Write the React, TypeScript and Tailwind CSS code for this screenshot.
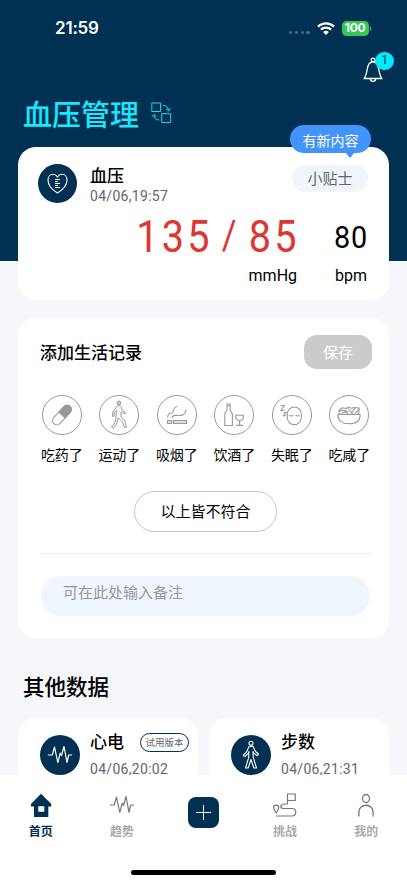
import type { ReactNode } from 'react';

// ---------- Icons ----------

function WifiIcon() {
  return (
    <svg width="18" height="13" viewBox="0 0 18 13" fill="none" stroke="#fff" strokeWidth="2.3">
      <path d="M1 4.6a11.6 11.6 0 0 1 16 0"/>
      <path d="M3.9 7.6a7.4 7.4 0 0 1 10.2 0"/>
      <path d="M9 13 6.1 10.1a4.2 4.2 0 0 1 5.8 0z" fill="#fff" stroke="none"/>
    </svg>
  );
}

function BellIcon() {
  return (
    <svg width="20" height="26" viewBox="0 0 20 26" fill="none" stroke="#fff" strokeWidth="1.3">
      <circle cx="10" cy="3" r="1.800"/>
      <path d="M1.300 21.500c1.600-3 2.500-5.500 2.900-9C4.800 7.800 6.500 4.900 10 4.900s5.200 2.900 5.800 7.600c.4 3.500 1.300 6 2.900 9z"/>
      <path d="M7.300 21.700c.2 3.600 5.200 3.600 5.400 0"/>
    </svg>
  );
}

function SwitchIcon() {
  return (
    <svg width="21" height="22" viewBox="0 0 21 22" fill="none" stroke="#12dff2" strokeWidth="1">
      <path d="M.8 1h8.800v8.500H.8zM10.700 11.700h9v8.800h-9z"/>
      <path d="M11.700 3.300c3.300 0 5.300 1.600 5.800 5M15 6.700l2.600 2.300 2-2.700"/>
      <path d="M8.300 18c-3.300 0-5-1.600-5.300-5M.800 15l2.100-2.500 2.700 2.300"/>
    </svg>
  );
}

function HeartIcon() {
  return (
    <svg width="21" height="21" viewBox="0 0 21 21" fill="none" stroke="#fff" strokeWidth="1.100">
      <path d="M10.500 20C5 16.600 1 12 1 7.300c0-3.500 2-6 5-6 2 0 3.500 1 4.500 2.700 1-1.700 2.500-2.700 4.500-2.700 3 0 5 2.500 5 6 0 4.700-4 9.300-9.500 12.700z"/>
      <path d="M8 6.500h5M8 8.500h3M8 10.500h5M8 12.500h3M8 14.500h5" strokeWidth="1"/>
    </svg>
  );
}

function PulseIcon({ className }: { className?: string }) {
  return (
    <svg className={className} width="26" height="20" viewBox="0 0 26 20" fill="none" stroke="currentColor" strokeWidth="1.200" strokeLinejoin="round">
      <path d="M.8 10h4.500L7.500 2l3.300 15.500 2.400-9.300 1.300 2.300L17 1.500l3 15.800 1.700-7.300h3.500"/>
    </svg>
  );
}

function StepsIcon() {
  return (
    <svg width="18" height="30" viewBox="0 0 18 30" fill="none" stroke="#fff" strokeWidth="1.100" strokeLinejoin="round">
      <circle cx="9" cy="3.200" r="2"/>
      <path d="M7 6.500h4l2.500 5 3 2.500-1.300 1.700-3.500-2.600-.7-1.600.2 5.700L14.500 28h-2.700L9 19.500 6.200 28H3.500l3.200-10.500.2-6-.9 2.400-3.500 2.800L1.300 15l3-2.600z"/>
    </svg>
  );
}

function PillIcon() {
  return (
    <svg width="28" height="28" viewBox="0 0 28 28" fill="none" stroke="#999" strokeWidth="1.100">
      <g transform="rotate(43 14 14)">
        <rect x="9.700" y="2.200" width="8.600" height="23.600" rx="4.300"/>
        <path d="M9.700 14V6.500a4.300 4.300 0 0 1 8.600 0V14z" fill="#999"/>
      </g>
    </svg>
  );
}

function WalkIcon() {
  return (
    <svg width="28" height="30" viewBox="0 0 28 30" fill="none" stroke="#999" strokeWidth="1" strokeLinejoin="round">
      <circle cx="14" cy="3" r="1.900" fill="#ccc"/>
      <path d="M12.300 5.900h2.500c1 0 1.500.7 1.700 1.700l.5 3 3.700 1.700-.5 1.500-4.200-1.500v4.500l3.800 4.400 1.700 6-1.900.6-2-5.600-4.300-4.500-1.600 6-3.500 4.800-1.700-1.200 3.200-4.500 1.400-5.500.3-6.500-1.900 1.700-.5 4-1.500-.2.400-4.600z"/>
    </svg>
  );
}

function SmokeIcon() {
  return (
    <svg width="28" height="28" viewBox="0 0 28 28" fill="none" stroke="#999" strokeWidth="1.100">
      <path d="M4.500 19.500h4.200v3H4.500zM10.500 19.500h13v3h-13z" fill="#ddd"/>
      <path d="M4.700 16.700c-.2-3.500 1.300-5 5-5 1-3.200 1.500-6 4.800-6.200M8.800 17c.5-2.300 2-2.800 4.800-2.600 4.700.4 8.700.5 9.400-5.900"/>
    </svg>
  );
}

function DrinkIcon() {
  return (
    <svg width="28" height="28" viewBox="0 0 28 28" fill="none" stroke="#999" strokeWidth="1.100">
      <path d="M7 3h3.200v5.500c0 2.200 2.200 2.500 2.200 5.200v10.800H4.800V13.700c0-2.700 2.200-3 2.200-5.200zM7 5h3"/>
      <path d="M15.800 14.200h7.600v1.500c0 5-7.600 5-7.600 0zM19.600 19.400v4.800M16 24.400h7.200"/>
    </svg>
  );
}

function SleepIcon() {
  return (
    <svg width="30" height="28" viewBox="0 0 30 28" fill="none" stroke="#999" strokeWidth="1.100">
      <rect x="10.300" y="6" width="14" height="17.600" rx="7"/>
      <path d="M12.300 14.300c1.200.9 2.500.9 3.700 0M18.700 14.300c1.200.9 2.500.9 3.700 0M3.800 4.500h3.500l-3.500 5h3.700M6.500 11.500h2.400l-2.400 3.300H9"/>
    </svg>
  );
}

function FoodIcon() {
  return (
    <svg width="28" height="28" viewBox="0 0 28 28" fill="none" stroke="#999" strokeWidth="1.100" strokeLinejoin="round">
      <path d="M2.800 13.500h22.400c0 6-4.300 9.300-11.200 9.300S2.800 19.500 2.800 13.500z"/>
      <path d="M4 13.300V9.500l3.300-2.700 4 .7 2-1.200 3 1 3-.8 5 .5-.8 6.300M4.300 10l5-.8 3.500 1.500M7 13.300c1-3 4-3.300 6-.3M13 7.500l5 5.500M15.700 12.500l4.500-5.700M20 13l3.800-5"/>
    </svg>
  );
}

function HomeIcon() {
  return (
    <svg width="22" height="25" viewBox="0 0 22 25" fill="#003153">
      <path fillRule="evenodd" d="M11 .8 21.300 11v2.500h-3V24H4V13.500H1V11zM8.300 13.300v5.500h6v-5.500z"/>
    </svg>
  );
}

function ChallengeIcon() {
  return (
    <svg width="25" height="26" viewBox="0 0 25 26" fill="none" stroke="#777" strokeWidth="1.200">
      <path d="M15.500 12V2h7.700v6.500h-7.700M15.500 12h-3c-4.500 0-5 4.500-1 4.500H20c5 0 5 7.500 0 7.500H4"/>
      <path d="M4.200 21c-1.600-2.200-2.600-3.600-2.600-5.200a2.600 2.600 0 0 1 5.200 0c0 1.600-1 3-2.600 5.200z"/>
    </svg>
  );
}

function UserIcon() {
  return (
    <svg width="18" height="25" viewBox="0 0 18 25" fill="none" stroke="#777" strokeWidth="1.300">
      <ellipse cx="9" cy="5.500" rx="3.500" ry="4"/>
      <path d="M1.900 23.500V19c0-9 14.200-9 14.200 0v4.500"/>
    </svg>
  );
}

// ---------- Data ----------

const HABITS: { label: string; icon: ReactNode }[] = [
  { label: '吃药了', icon: <PillIcon/> },
  { label: '运动了', icon: <WalkIcon/> },
  { label: '吸烟了', icon: <SmokeIcon/> },
  { label: '饮酒了', icon: <DrinkIcon/> },
  { label: '失眠了', icon: <SleepIcon/> },
  { label: '吃咸了', icon: <FoodIcon/> },
];

// ---------- Sections ----------

function StatusBar() {
  return (
    <div className="flex h-[52px] items-center justify-between pt-1 pr-[36px] pl-[55px] text-white">
      <span className="font-['Inter'] text-[17px] font-semibold leading-none tracking-[-0.2px]">21:59</span>
      <div className="flex items-center">
        <div className="mt-[9px] flex gap-[2.500px]">
          {[0, 1, 2, 3].map(i => <i key={i} className="size-[3.200px] rounded-full bg-[#4d6b84]"/>)}
        </div>
        <div className="ml-[7px]"><WifiIcon/></div>
        <div className="ml-[7px] flex h-[15px] w-[27px] items-center justify-center rounded-[4.500px] bg-[#34c759] font-['Inter'] text-[12px] font-bold leading-none tracking-[-0.3px]">100</div>
        <i className="ml-px h-[5px] w-[1.500px] rounded-r-full bg-[#34c759]"/>
      </div>
    </div>
  );
}

function PressureCard() {
  return (
    <section className="relative mx-[18px] h-[153px] rounded-[18px] bg-white">
      <div className="flex h-[57px] items-start pt-[17px] pr-[21px] pl-5">
        <div className="flex size-[39px] items-center justify-center rounded-full bg-[#003153]"><HeartIcon/></div>
        <div className="-mt-px ml-[13px]">
          <div className="text-[17px] font-medium leading-6">血压</div>
          <div className="mt-px font-['Roboto'] text-[14px] leading-4 tracking-[0.300px] text-[#666]">04/06,19:57</div>
        </div>
        <div className="mt-px ml-auto flex h-[27px] w-[76px] items-center justify-center rounded-full bg-[#f0f5fc] text-[15px] text-[#666]">小贴士</div>
      </div>

      <div className="flex justify-end pr-[19px] font-['Roboto']">
        <div className="flex flex-col items-end">
          <div className="-mr-[3px] flex h-[63px] origin-right scale-x-90 items-center pt-[3px] text-[44px] leading-none tracking-[3.600px] text-[#dc3731]">
            <span>135</span>
            <span className="mx-[10px] -mt-[3px] text-[40px]">/</span>
            <span>85</span>
          </div>
          <div className="mt-px text-[16px] leading-4">mmHg</div>
        </div>
        <div className="ml-[35px] flex flex-col items-center">
          <div className="flex h-[63px] scale-x-90 items-center pt-[3px] text-[32px] leading-none tracking-[1px]">80</div>
          <div className="mt-px text-[16px] leading-4">bpm</div>
        </div>
      </div>

      {/* new content bubble */}
      <div className="absolute -top-[22px] right-[18px] flex h-7 w-[81px] items-center justify-center rounded-full bg-[#4294fb] pt-[2px] text-[14px] text-white">
        有新内容
        <i className="absolute top-[27px] left-[55px] border-x-[5px] border-t-[6px] border-x-transparent border-t-[#4294fb]"/>
      </div>
    </section>
  );
}

function HabitCard() {
  return (
    <section className="mx-[18px] mt-[18px] h-[320px] rounded-[18px] bg-white pt-[17px]">
      <div className="flex items-center justify-between pr-[17px] pl-[22px]">
        <h2 className="text-[17px] font-medium">添加生活记录</h2>
        <button className="h-[34px] w-[68px] rounded-[13px] bg-[#cbcbcb] text-[15px] text-white">保存</button>
      </div>

      <div className="mt-[26px] mr-[11px] ml-[15px] grid grid-cols-6">
        {HABITS.map(h => (
          <div key={h.label} className="flex flex-col items-center">
            <div className="flex size-10 items-center justify-center rounded-full border border-[#999]">{h.icon}</div>
            <span className="mt-[9px] text-[14px] leading-5 tracking-[-0.200px] whitespace-nowrap">{h.label}</span>
          </div>
        ))}
      </div>

      <div className="mt-[27px] flex justify-center pl-1">
        <button className="h-[41px] w-[143px] rounded-full border border-[#c4c4c4] text-[15px]">以上皆不符合</button>
      </div>

      <div className="mt-[21px] mr-[17px] ml-[22px] border-t border-[#f0f0f0]"/>
      <div className="mt-[22px] mr-[19px] ml-[23px] h-10 rounded-full bg-[#eff5fd] pt-[5px] pl-[22px] text-[15px] leading-[22px] text-[#999]">可在此处输入备注</div>
    </section>
  );
}

function DataCard({ title, date, icon, tag }: { title: string; date: string; icon: ReactNode; tag?: string }) {
  return (
    <div className="flex h-[120px] w-[180px] items-start rounded-[18px] bg-white pt-[17px] pl-[22px]">
      <div className="flex size-10 shrink-0 items-center justify-center rounded-full bg-[#003153] text-white">{icon}</div>
      <div className="ml-[10px] flex-1">
        <div className="-mt-[5px] flex h-6 items-center justify-between pr-[9px]">
          <span className="-mt-[2px] text-[17px] font-medium">{title}</span>
          {tag && <span className="flex h-[19px] w-[49px] items-center justify-center rounded-full border border-[#003153] pt-px text-[9.500px] text-[#666]">{tag}</span>}
        </div>
        <div className="mt-[7px] font-['Roboto'] text-[14px] leading-4 tracking-[0.300px] text-[#666]">{date}</div>
      </div>
    </div>
  );
}

function Tab({ label, icon, active }: { label: string; icon: ReactNode; active?: boolean }) {
  return (
    <div className="flex flex-1 flex-col items-center">
      <div className="flex h-[28px] items-center">{icon}</div>
      <span className={`mt-[4px] text-[12px] leading-4 ${active ? 'font-bold text-[#003153]' : 'font-bold text-[#aaa]'}`}>{label}</span>
    </div>
  );
}

function TabBar() {
  return (
    <nav className="flex h-[108px] flex-col items-center bg-white pt-4">
      <div className="flex h-[79px] w-full">
        <Tab label="首页" icon={<HomeIcon/>} active/>
        <Tab label="趋势" icon={<PulseIcon className="text-[#777]"/>}/>
        <div className="flex flex-1 justify-center">
          <div className="mt-[6px] flex size-[31px] items-center justify-center rounded-[8px] bg-[#003153]">
            <svg width="17" height="17" viewBox="0 0 17 17" stroke="#fff" strokeWidth="1"><path d="M8.500 1v15M1 8.500h15"/></svg>
          </div>
        </div>
        <Tab label="挑战" icon={<ChallengeIcon/>}/>
        <Tab label="我的" icon={<UserIcon/>}/>
      </div>
      <div className="h-[5px] w-[145px] rounded-full bg-black"/>
    </nav>
  );
}

export default function App() {
  return (
    <div className="w-[407px] overflow-hidden bg-[#f6f7fa] font-['Noto_Sans_CJK_SC',sans-serif] text-black">
      <main className="h-[775px] overflow-hidden bg-[linear-gradient(to_bottom,#003153_261px,#f6f7fa_261px)]">
        <StatusBar/>
        <header className="h-[95px]">
          <div className="flex h-[34px] justify-end pt-[5px] pr-[24px]">
            <div className="relative">
              <BellIcon/>
              <span className="absolute -top-[5px] left-[12px] flex h-[18px] w-[19px] items-center justify-center rounded-full bg-[#00eaff] pb-[2px] font-['Roboto'] text-[12px] leading-none text-[#003153]">1</span>
            </div>
          </div>
          <div className="flex items-center pt-[5px] pl-[23px]">
            <h1 className="text-[29px] font-medium leading-[44px] text-[#12eaff]">血压管理</h1>
            <div className="ml-3"><SwitchIcon/></div>
          </div>
        </header>

        <PressureCard/>
        <HabitCard/>

        <h2 className="mt-[32px] ml-[23px] text-[21.500px] font-medium leading-8">其他数据</h2>
        <div className="mx-[18px] mt-[16px] flex justify-between">
          <DataCard title="心电" date="04/06,20:02" tag="试用版本" icon={<PulseIcon/>}/>
          <DataCard title="步数" date="04/06,21:31" icon={<StepsIcon/>}/>
        </div>
      </main>
      <TabBar/>
    </div>
  );
}
